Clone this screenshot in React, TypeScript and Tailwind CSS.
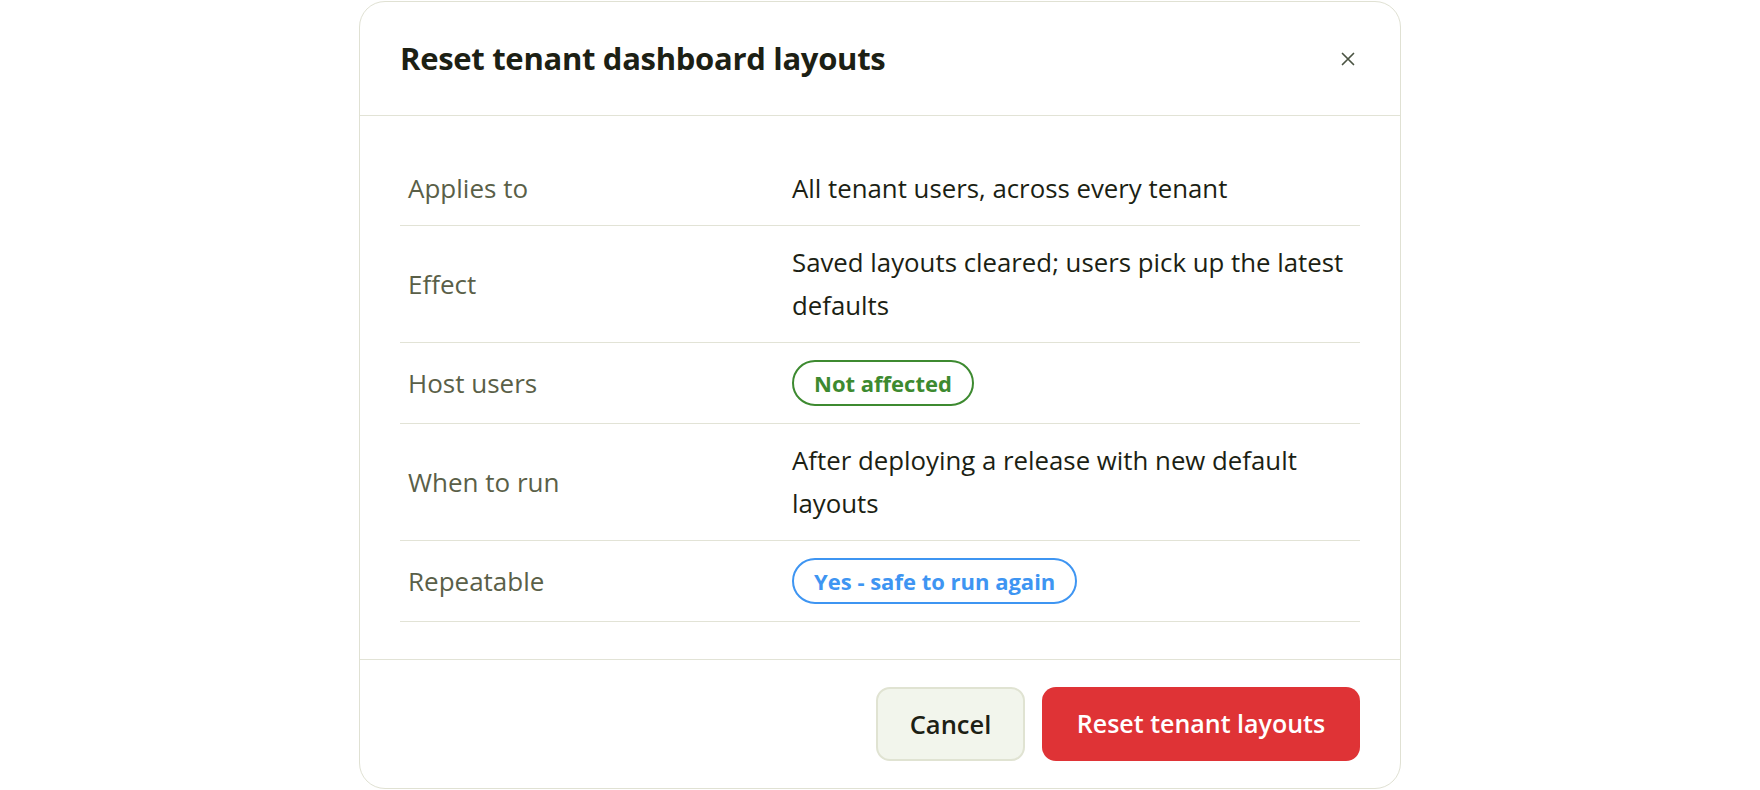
import React from "react";

const rows: { label: string; value?: string; badge?: "green" | "blue"; badgeText?: string }[] = [
  { label: "Applies to", value: "All tenant users, across every tenant" },
  { label: "Effect", value: "Saved layouts cleared; users pick up the latest defaults" },
  { label: "Host users", badge: "green", badgeText: "Not affected" },
  { label: "When to run", value: "After deploying a release with new default layouts" },
  { label: "Repeatable", badge: "blue", badgeText: "Yes - safe to run again" },
];

export default function App() {
  return (
    <div
      className="w-full h-[790px] bg-white flex items-center justify-center"
      style={{ fontFamily: '"Open Sans", "Noto Sans", sans-serif' }}
    >
      <div className="w-[1042px] bg-white border border-[#e0e1d3] rounded-[26px] flex flex-col">
        <div className="h-[114px] px-10 flex items-center justify-between border-b border-[#e2e3d6]">
          <h1 className="text-[31px] font-bold text-[#1c2014] tracking-[-0.3px]">Reset tenant dashboard layouts</h1>
          <button className="w-6 h-6 flex items-center justify-center text-[#4b5443]" aria-label="Close">
            <svg width="14" height="14" viewBox="0 0 14 14" fill="none" stroke="currentColor" strokeWidth="1.7" strokeLinecap="round">
              <path d="M1.5 1.5 L12.5 12.5 M12.5 1.5 L1.5 12.5" />
            </svg>
          </button>
        </div>
        <div className="px-10 pt-[36px] pb-[37px]">
          {rows.map((r) => (
            <div key={r.label} className="flex border-b border-[#e2e3d6]">
              <div
                className={`w-2/5 px-2 flex items-center text-[26px] leading-[43px] text-[#5a5f48] ${
                  r.badge ? "py-[17px]" : "py-[15px]"
                }`}
              >
                {r.label}
              </div>
              <div
                className={`w-3/5 px-2 flex items-center text-[25.8px] leading-[43px] text-[#1c1f14] ${
                  r.badge ? "py-[17px]" : "py-[15px]"
                }`}
              >
                {r.badge === "green" && (
                  <span className="h-[46px] px-[20px] inline-flex items-center rounded-full border-2 border-[#3d8a30] text-[#3d8a30] text-[22px] font-bold leading-none">
                    {r.badgeText}
                  </span>
                )}
                {r.badge === "blue" && (
                  <span className="h-[46px] px-[20px] inline-flex items-center rounded-full border-2 border-[#3e95f2] text-[#3e95f2] text-[22px] font-bold leading-none">
                    {r.badgeText}
                  </span>
                )}
                {!r.badge && <span>{r.value}</span>}
              </div>
            </div>
          ))}
        </div>
        <div className="border-t border-[#e2e3d6] px-10 py-[27px] flex justify-end gap-[17px]">
          <button className="h-[74px] w-[149px] rounded-[14px] bg-[#f2f5ec] border-2 border-[#e0e3d2] text-[25.5px] font-semibold text-[#1c2014]">
            Cancel
          </button>
          <button className="h-[74px] w-[318px] rounded-[14px] bg-[#df3336] text-[25px] font-semibold text-white">
            Reset tenant layouts
          </button>
        </div>
      </div>
    </div>
  );
}
